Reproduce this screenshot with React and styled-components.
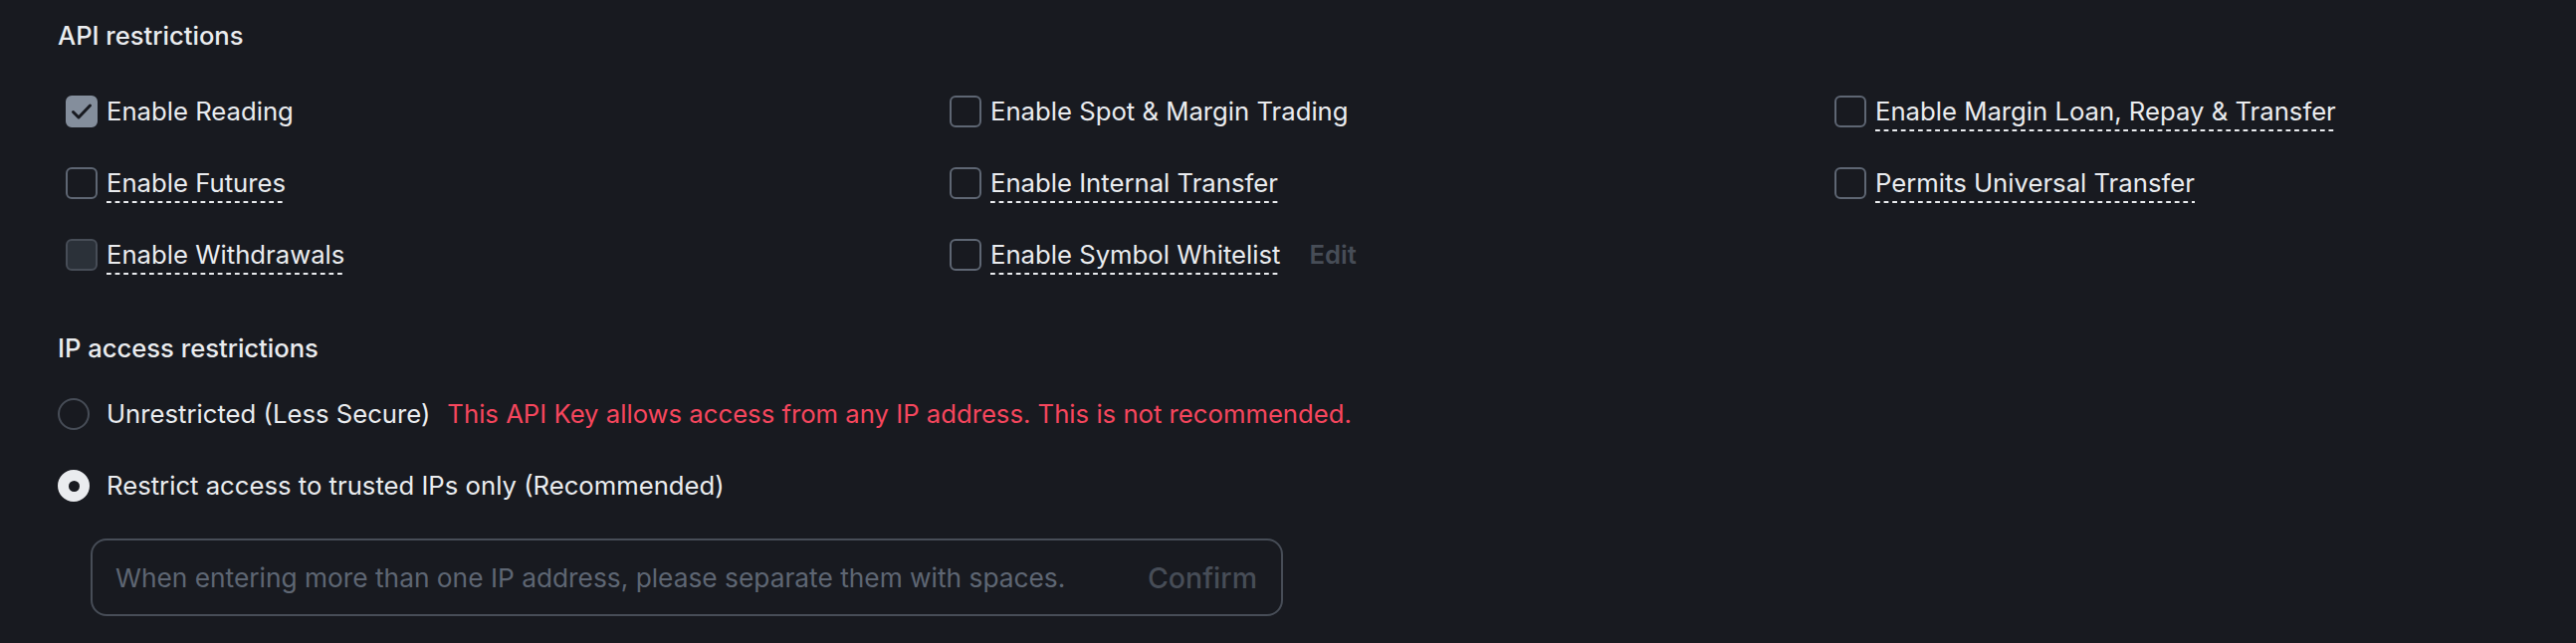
import React from "react";
import styled, { createGlobalStyle } from "styled-components";

const GlobalStyle = createGlobalStyle`
  html, body {
    margin: 0;
    padding: 0;
    background: #181a20;
  }
  body {
    font-family: Inter, "Noto Sans", "Liberation Sans", sans-serif;
    color: #eaecef;
  }
`;

const Page = styled.div`
  width: 2588px;
  height: 646px;
  box-sizing: border-box;
  padding: 20px 0 0 58px;
  background: #181a20;
  overflow: hidden;
`;

const Heading = styled.div`
  font-size: 25.6px;
  line-height: 32px;
  font-weight: 500;
  color: #eaecef;
  margin-top: ${(p) => p.$mt || 0}px;
`;

const Grid = styled.div`
  display: grid;
  grid-template-columns: 888px 889px 1fr;
  grid-auto-rows: 32px;
  row-gap: 40px;
  margin: 44px 0 0 8px;
`;

const CheckRow = styled.label`
  display: flex;
  align-items: center;
  gap: 9px;
  font-size: 25.7px;
  line-height: 32px;
  color: #eaecef;
  white-space: nowrap;
`;

const Box = styled.span`
  box-sizing: border-box;
  width: 32px;
  height: 32px;
  flex: none;
  border-radius: 6px;
  border: 2px solid
    ${(p) => (p.$state === "checked" ? "#848e9c" : p.$state === "disabled" ? "#474d57" : "#5e6673")};
  background: ${(p) =>
    p.$state === "checked" ? "#848e9c" : p.$state === "disabled" ? "#2b3139" : "transparent"};
  display: flex;
  align-items: center;
  justify-content: center;
`;

const Label = styled.span`
  display: inline-block;
  line-height: 32px;
  padding-bottom: ${(p) => (p.$tip ? 4 : 0)}px;
  margin-bottom: ${(p) => (p.$tip ? -4 : 0)}px;
  background-image: ${(p) =>
    p.$tip ? "linear-gradient(to right, #eaecef 60%, transparent 60%)" : "none"};
  background-size: 8.6px 2px;
  background-repeat: repeat-x;
  background-position: left bottom;
`;

const EditLink = styled.span`
  margin-left: 20px;
  font-size: 25.7px;
  color: #474d57;
  font-weight: 600;
`;

const RadioList = styled.div`
  display: flex;
  flex-direction: column;
  gap: 40px;
  margin-top: 34px;
`;

const RadioRow = styled.label`
  display: flex;
  align-items: center;
  gap: 17px;
  font-size: 25.7px;
  line-height: 32px;
  white-space: nowrap;
`;

const RadioDot = styled.span`
  box-sizing: border-box;
  width: 32px;
  height: 32px;
  flex: none;
  border-radius: 50%;
  border: 2px solid ${(p) => (p.$on ? "#eaecef" : "#474d57")};
  background: ${(p) => (p.$on ? "#eaecef" : "transparent")};
  display: flex;
  align-items: center;
  justify-content: center;
  &::after {
    content: "";
    display: ${(p) => (p.$on ? "block" : "none")};
    width: 11px;
    height: 11px;
    border-radius: 50%;
    background: #181a20;
  }
`;

const Warning = styled.span`
  color: #f6465d;
`;

const InputBox = styled.div`
  box-sizing: border-box;
  width: 1198px;
  height: 78px;
  margin: 37px 0 0 33px;
  border: 2px solid #474d57;
  border-radius: 16px;
  display: flex;
  align-items: center;
  padding: 0 24px 0 23px;
`;

const IpInput = styled.input`
  flex: 1;
  min-width: 0;
  background: transparent;
  border: none;
  outline: none;
  font-family: inherit;
  font-size: 26.3px;
  color: #eaecef;
  padding: 0;
  &::placeholder {
    color: #5e6673;
  }
`;

const ConfirmBtn = styled.button`
  background: transparent;
  border: none;
  padding: 0;
  font-family: inherit;
  font-size: 28.5px;
  font-weight: 500;
  color: #474d57;
  cursor: not-allowed;
`;

const Check = () => (
  <svg width="24" height="24" viewBox="0 0 24 24" fill="none">
    <path d="M3.5 12.5l5.5 5.5L20.5 6" stroke="#181a20" strokeWidth="3" strokeLinecap="round" strokeLinejoin="round" />
  </svg>
);

const items = [
  { text: "Enable Reading", state: "checked" },
  { text: "Enable Spot & Margin Trading" },
  { text: "Enable Margin Loan, Repay & Transfer", tip: true },
  { text: "Enable Futures", tip: true },
  { text: "Enable Internal Transfer", tip: true },
  { text: "Permits Universal Transfer", tip: true },
  { text: "Enable Withdrawals", tip: true, state: "disabled" },
  { text: "Enable Symbol Whitelist", tip: true, edit: true },
];

export default function App() {
  return (
    <>
      <GlobalStyle />
      <Page>
        <Heading>API restrictions</Heading>
        <Grid>
          {items.map((it) => (
            <CheckRow key={it.text}>
              <Box $state={it.state || "off"}>{it.state === "checked" && <Check />}</Box>
              <Label $tip={it.tip}>{it.text}</Label>
              {it.edit && <EditLink>Edit</EditLink>}
            </CheckRow>
          ))}
        </Grid>
        <Heading $mt={62}>IP access restrictions</Heading>
        <RadioList>
          <RadioRow>
            <RadioDot />
            <span>Unrestricted (Less Secure)</span>
            <Warning>This API Key allows access from any IP address. This is not recommended.</Warning>
          </RadioRow>
          <RadioRow>
            <RadioDot $on />
            <span>Restrict access to trusted IPs only (Recommended)</span>
          </RadioRow>
        </RadioList>
        <InputBox>
          <IpInput placeholder="When entering more than one IP address, please separate them with spaces." />
          <ConfirmBtn>Confirm</ConfirmBtn>
        </InputBox>
      </Page>
    </>
  );
}
